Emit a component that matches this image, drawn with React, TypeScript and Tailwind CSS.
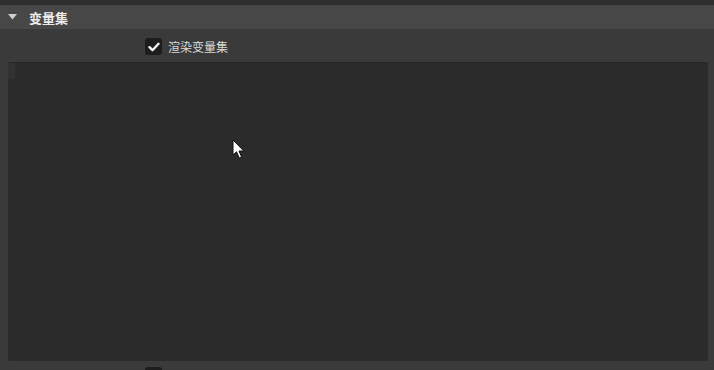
const FONT = { fontFamily: '"Noto Sans CJK SC", "Noto Sans", sans-serif' };

const CheckBox = ({ checked }: { checked: boolean }) => (
  <div className="w-[17px] h-[17px] rounded-[3px] bg-[#1d1d1d] flex items-center justify-center">
    {checked && (
      <svg width="12" height="10" viewBox="0 0 12 10">
        <path d="M1.5 5.2 L4.5 8.2 L10.5 1.8" fill="none" stroke="#f2f2f2" strokeWidth="2.4" strokeLinecap="round" strokeLinejoin="round" />
      </svg>
    )}
  </div>
);

export default function App() {
  return (
    <div className="w-[714px] h-[370px] bg-[#3a3a3a] overflow-hidden relative" style={FONT}>
      <div className="h-[5px] bg-[#2e2e2e]" />
      <div className="h-[24px] bg-[#474747] flex items-center">
        <svg width="9" height="6" viewBox="0 0 9 6" className="ml-[8px] mr-[12px]">
          <path d="M0 0 H9 L4.5 5.5 Z" fill="#cfcfcf" />
        </svg>
        <span className="text-[13px] font-bold text-[#ececec] leading-none">变量集</span>
      </div>
      <div className="h-[33px] flex items-center pl-[145px] gap-[6px] pt-[2px]">
        <CheckBox checked />
        <span className="text-[12px] text-[#dcdcdc] leading-none">渲染变量集</span>
      </div>
      <div className="ml-[8px] mr-[6px] h-[299px] bg-[#2b2b2c] rounded-[2px] border-t border-[#262626] relative">
        <div className="absolute left-0 top-0 w-[7px] h-[16px] bg-[#323232] rounded-[1px]" />
      </div>
      <div className="pl-[145px] mt-[6px]">
        <CheckBox checked={false} />
      </div>
      <svg width="14" height="22" viewBox="0 0 14 22" className="absolute left-[232px] top-[139px]">
        <path d="M1 1 L1 16 L4.5 12.8 L7.2 19 L9.6 18 L7 12 L11.8 12 Z" fill="#ffffff" stroke="#111" strokeWidth="1" />
      </svg>
    </div>
  );
}
